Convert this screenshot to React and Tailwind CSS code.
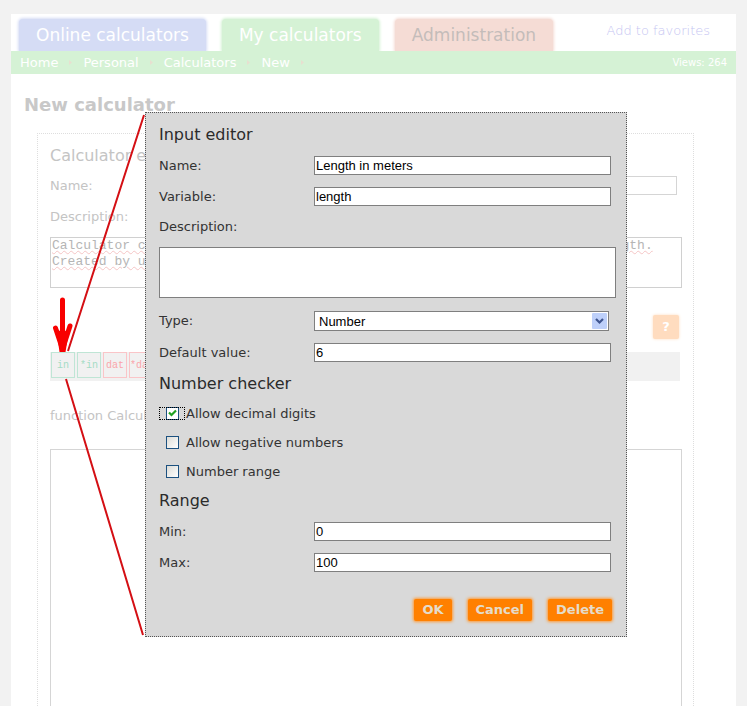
import React from "react";

const tabs = [
    { label: "Online calculators", style: "bg-[#d5dcf5] text-white shadow-[0_0_3px_1px_#d5dcf5]" },
    { label: "My calculators", style: "bg-[#d5f2d5] text-white shadow-[0_0_3px_1px_#d5f2d5]" },
    { label: "Administration", style: "bg-[#f5dcd5] text-[#c4bcba] shadow-[0_0_3px_1px_#f5dcd5]" },
];

const crumbs = ["Home", "Personal", "Calculators", "New"];

const tools = [
    { label: "in", style: "border-[#bfe5d5] text-[#a5dcc5]" },
    { label: "*in", style: "border-[#bfe5d5] text-[#a5dcc5]" },
    { label: "dat", style: "border-[#fac5c8] text-[#faa5aa]" },
    { label: "*dat", style: "border-[#fac5c8] text-[#faa5aa]" },
];

const checks = [
    { id: "decimal", label: "Allow decimal digits", checked: true },
    { id: "negative", label: "Allow negative numbers", checked: false },
    { id: "range", label: "Number range", checked: false },
];

const summary =
    "Calculator converts length from meters into many other units used for length.\nCreated by user.";

const Header = () => (
    <header>
        <div className="flex h-[37px] items-end overflow-hidden pl-2">
            <nav className="flex gap-4">
                {tabs.map((tab) => (
                    <a
                        key={tab.label}
                        href="#"
                        className={`flex h-8 items-center rounded-t-sm px-[17px] pt-px text-[17px] whitespace-nowrap ${tab.style}`}
                    >
                        {tab.label}
                    </a>
                ))}
            </nav>
            <a href="#" className="mr-[26px] mb-[11px] ml-auto text-[13px] font-extralight whitespace-nowrap text-[#c5c5f2]">
                Add to favorites
            </a>
        </div>
        <div className="flex h-[23px] items-center justify-between bg-[#d5f2d5] px-[9px] text-[13px] text-white">
            <nav className="flex items-center">
                {crumbs.map((crumb) => (
                    <span key={crumb} className="flex items-center">
                        <a href="#">{crumb}</a>
                        <svg className="mx-2 h-[7px] w-[9px]" viewBox="0 0 9 7">
                            <path d="M3 1l3 2.500L3 6z" fill="#e8dfd0" />
                        </svg>
                    </span>
                ))}
            </nav>
            <span className="text-[10px]">Views: 264</span>
        </div>
    </header>
);

const CalculatorForm = () => (
    <section className="mr-[42px] ml-[26px] flex flex-1 flex-col border border-b-0 border-dotted border-[#dedede] pr-[11px] pl-3 text-[13px] text-[#c4c4c4]">
        <h2 className="mt-2 flex h-[28px] items-center text-[16px] font-medium">Calculator editor</h2>
        <div className="flex h-[31px] items-center pr-[5px]">
            <label htmlFor="calc-name" className="w-[155px]">Name:</label>
            <input id="calc-name" className="h-[19px] min-w-0 flex-1 border border-[#d5d5d5]" />
        </div>
        <label htmlFor="calc-text" className="flex h-[31px] items-center">Description:</label>
        <textarea
            id="calc-text"
            spellCheck={false}
            defaultValue={summary}
            className="mt-[5px] h-[51px] shrink-0 resize-none overflow-hidden border border-[#d0d0d0] px-px font-['Liberation_Mono',monospace] text-[13px] leading-4 text-[#b5b5b5] underline decoration-[#f5c5c5] decoration-wavy decoration-1"
        />
        <button
            type="button"
            className="mt-[27px] mr-[3px] h-6 w-[26px] shrink-0 self-end rounded-xs bg-[#ffdcbf] font-bold text-white shadow-[0_0_3px_#ffdcbf]"
        >
            ?
        </button>
        <div className="mt-[13px] mr-[2px] flex h-[29px] shrink-0 gap-[2px] overflow-hidden bg-[#f1f1f1] pl-px">
            {tools.map((tool) => (
                <button
                    key={tool.label}
                    type="button"
                    className={`h-[26px] w-6 shrink-0 overflow-hidden border font-['Liberation_Mono',monospace] text-[10px] ${tool.style}`}
                >
                    {tool.label}
                </button>
            ))}
        </div>
        <label htmlFor="calc-code" className="mt-[20px] flex h-[29px] items-center">function Calculate()</label>
        <textarea id="calc-code" className="mt-[19px] flex-1 resize-none border border-b-0 border-[#d5d5d5]" />
    </section>
);

const Field = ({ id, label, value }) => (
    <div className="flex h-[31px] items-center pr-[5px]">
        <label htmlFor={id} className="w-[155px]">{label}</label>
        <input
            id={id}
            defaultValue={value}
            className="h-[19px] min-w-0 flex-1 border border-[#7f7f7f] bg-white px-px font-['Liberation_Sans',sans-serif] text-[13px] text-black"
        />
    </div>
);

const Heading = ({ children }) => (
    <h3 className="flex h-[30px] items-center text-[16px] font-medium text-[#2b2b2b]">{children}</h3>
);

const CheckRow = ({ id, label, checked }) => (
    <div className="flex h-[29px] items-center">
        <span
            className={`mr-px flex h-[13px] w-[26px] items-center justify-center ${
                checked ? "outline-1 -outline-offset-1 outline-dotted outline-black" : ""
            }`}
        >
            <input
                id={id}
                type="checkbox"
                defaultChecked={checked}
                className="peer h-[13px] w-[13px] appearance-none border border-[#1c5180] bg-linear-to-br from-[#dcdcd7] to-white checked:bg-white checked:bg-none"
            />
            <svg className="pointer-events-none absolute hidden h-[9px] w-[9px] peer-checked:block" viewBox="0 0 9 9">
                <path d="M1 3.500l2.500 2.500L8 1.500" fill="none" stroke="#21a121" strokeWidth="2.200" />
            </svg>
        </span>
        <label htmlFor={id}>{label}</label>
    </div>
);

const DialogButton = ({ children }) => (
    <button
        type="button"
        className="h-[22px] rounded-xs bg-[#ff8000] px-2 text-[13px] font-bold text-[#e5dccb] shadow-[0_0_3px_1px_#ff9a35]"
    >
        {children}
    </button>
);

const InputEditor = () => (
    <form
        role="dialog"
        aria-label="Input editor"
        className="absolute top-[112px] right-[120px] left-[145px] border border-dotted border-[#555555] bg-[#d9d9d9] pt-[7px] pr-[10px] pb-[15px] pl-[13px] text-[13px] text-[#333333]"
    >
        <Heading>Input editor</Heading>
        <Field id="name" label="Name:" value="Length in meters" />
        <Field id="variable" label="Variable:" value="length" />
        <label htmlFor="description" className="flex h-[29px] items-center">Description:</label>
        <textarea id="description" className="mt-[6px] mb-[7px] block h-[51px] w-full resize-none border border-[#7f7f7f] bg-white" />
        <div className="mb-px flex h-[31px] items-center pr-[7px]">
            <label htmlFor="type" className="w-[155px]">Type:</label>
            <div className="relative flex flex-1">
                <select
                    id="type"
                    className="h-5 w-full appearance-none border border-[#7f7f7f] bg-white pl-1 font-['Liberation_Sans',sans-serif] text-[13px] text-black"
                >
                    <option>Number</option>
                </select>
                <svg className="pointer-events-none absolute top-[2px] right-[2px] h-4 w-[15px]" viewBox="0 0 15 16">
                    <rect width="15" height="16" rx="1" fill="#bed0fa" />
                    <path d="M4 6l3.500 3.500L11 6" fill="none" stroke="#3f5590" strokeWidth="2.200" />
                </svg>
            </div>
        </div>
        <Field id="default" label="Default value:" value="6" />
        <div className="pt-px">
            <Heading>Number checker</Heading>
            {checks.map((check) => (
                <CheckRow key={check.id} {...check} />
            ))}
        </div>
        <Heading>Range</Heading>
        <Field id="min" label="Min:" value="0" />
        <Field id="max" label="Max:" value="100" />
        <div className="mt-[21px] mr-1 flex justify-end gap-4">
            <DialogButton>OK</DialogButton>
            <DialogButton>Cancel</DialogButton>
            <DialogButton>Delete</DialogButton>
        </div>
    </form>
);

const Callout = () => (
    <svg className="pointer-events-none absolute top-0 left-0 h-[706px] w-[150px]" viewBox="0 0 150 706" fill="none">
        <path d="M144 115L68 351M66 379l77 256" stroke="#d40f14" strokeWidth="2" />
        <g stroke="#f80000" strokeWidth="5" strokeLinecap="round" strokeLinejoin="round">
            <path d="M62.500 300v48M55.500 328l7 21L70 326" />
        </g>
        <path d="M56 328l6.500 5 7-5-4 24h-6z" fill="#f80000" />
    </svg>
);

const App = () => (
    <div className="relative flex h-screen flex-col overflow-hidden bg-[#f2f2f2] pt-[14px] pr-[11px] pl-[11px] font-['DejaVu_Sans',sans-serif]">
        <main className="flex flex-1 flex-col bg-white">
            <Header />
            <h1 className="mt-[15px] mb-[14px] ml-[13px] flex h-[30px] items-center text-[18px] font-bold text-[#c8c8c8]">
                New calculator
            </h1>
            <CalculatorForm />
        </main>
        <InputEditor />
        <Callout />
    </div>
);

export default App;
